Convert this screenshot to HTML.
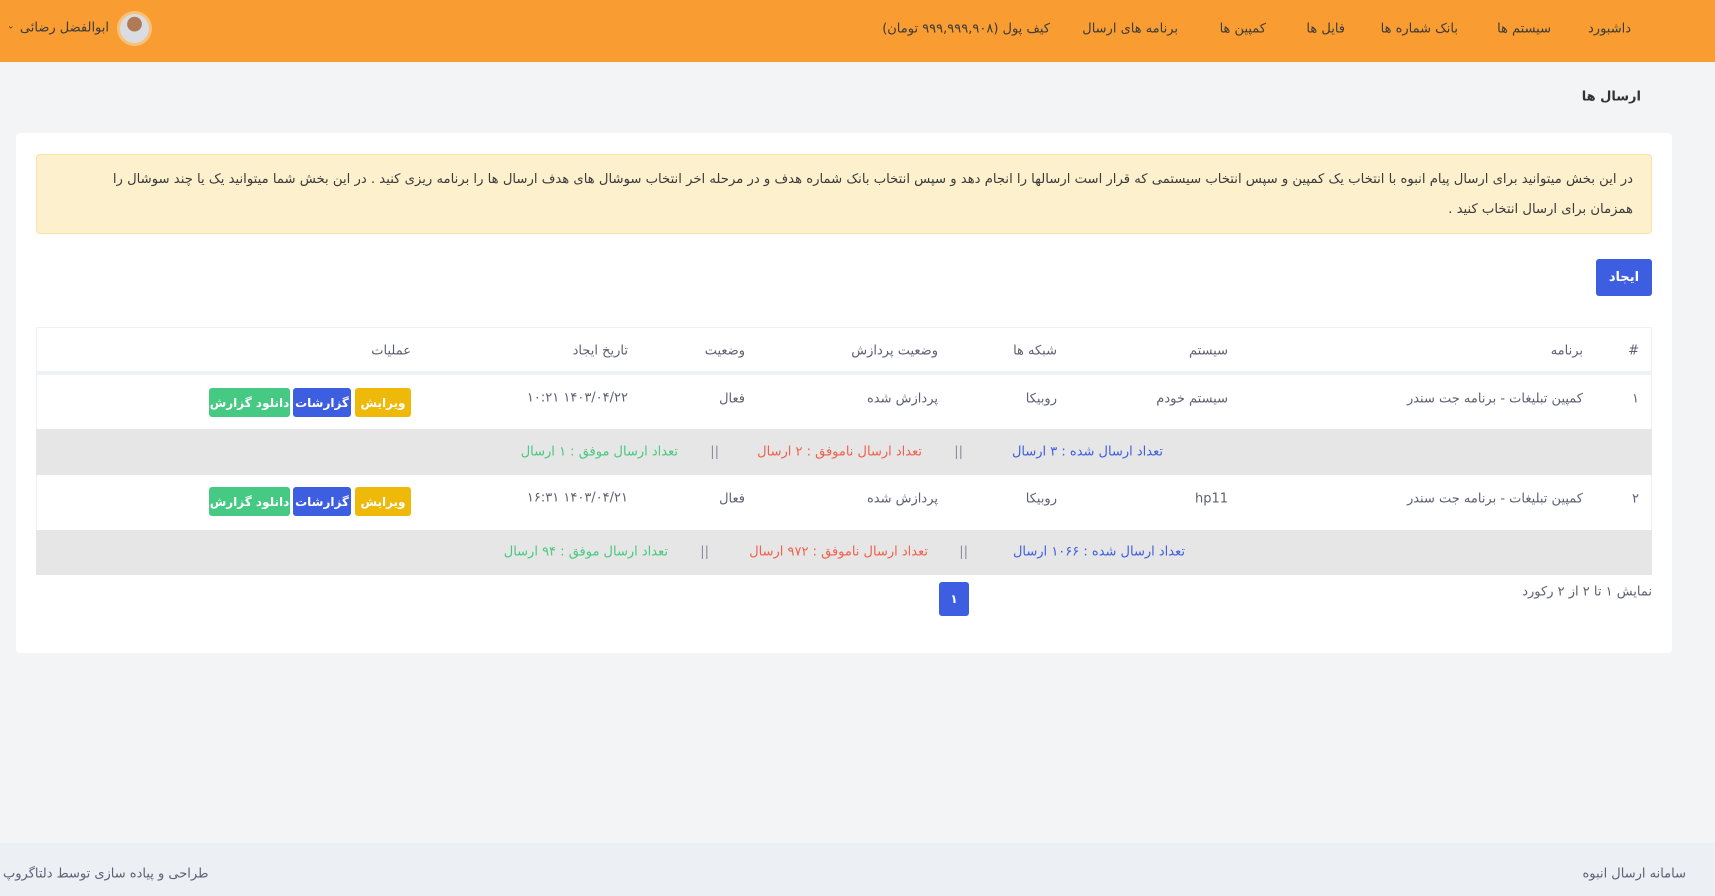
<!DOCTYPE html>
<html><head><meta charset="utf-8"><style>
*{margin:0;padding:0;box-sizing:border-box}
body{width:1715px;height:896px;background:#f3f4f6;font-family:"DejaVu Sans",sans-serif;font-size:13px;color:#5f5f73;position:relative;overflow:hidden}
.r{position:absolute;direction:rtl;white-space:nowrap;transform:translateY(-50%);line-height:1}
.hdr{position:absolute;left:0;top:0;width:1715px;height:62px;background:#f99d32}
.hdr .r{color:#3a3a3a;font-size:13px}
.card{position:absolute;left:16px;top:133px;width:1656px;height:520px;background:#fff;border-radius:4px}
.alert{position:absolute;left:36px;top:154px;width:1616px;height:80px;background:#fdf0cc;border:1px solid #f8e3a8;border-radius:4px;direction:rtl;padding:10px 18px 0 10px;line-height:30px;color:#3a3a3a;font-size:13.2px;text-align:right;white-space:nowrap;overflow:hidden}
.btn{position:absolute;color:#fff;font-size:12px;font-weight:bold;border-radius:3px;display:flex;align-items:center;justify-content:center;direction:rtl}
.line{position:absolute;left:36px;width:1616px}
</style></head><body>
<div class="hdr">
<div class="r" style="right:84px;top:29px">داشبورد</div>
<div class="r" style="right:164px;top:29px">سیستم ها</div>
<div class="r" style="right:257px;top:29px">بانک شماره ها</div>
<div class="r" style="right:370px;top:29px">فایل ها</div>
<div class="r" style="right:449px;top:29px">کمپین ها</div>
<div class="r" style="right:537px;top:29px">برنامه های ارسال</div>
<div class="r" style="right:665px;top:29px">کیف پول (۹۹۹,۹۹۹,۹۰۸ تومان)</div>
<div style="position:absolute;left:117px;top:11px;width:35px;height:35px;border-radius:50%;background:#f6c27a;padding:3px"><div style="width:29px;height:29px;border-radius:50%;background:radial-gradient(circle at 50% 35%,#b07a55 0 30%,#d9dde3 32% 100%)"></div></div>
<div class="r" style="right:1606px;top:28px">ابوالفضل رضائی</div>
<div class="r" style="left:7px;top:27px;font-size:9px">⌄</div>
</div>
<div class="r" style="right:74px;top:97px;font-weight:bold;color:#333;font-size:13px">ارسال ها</div>
<div class="card"></div>
<div class="alert">در این بخش میتوانید برای ارسال پیام انبوه با انتخاب یک کمپین و سپس انتخاب سیستمی که قرار است ارسالها را انجام دهد و سپس انتخاب بانک شماره هدف و در مرحله اخر انتخاب سوشال های هدف ارسال ها را برنامه ریزی کنید . در این بخش شما میتوانید یک یا چند سوشال را<br>همزمان برای ارسال انتخاب کنید .</div>
<div class="btn" style="left:1596px;top:259px;width:56px;height:37px;background:#3d5ee1;font-size:13px">ایجاد</div>

<div class="line" style="top:327px;height:48px;border:1px solid #eef0f4;border-bottom:4px solid #eef1f6"></div>
<div class="line" style="top:375px;height:155px;border-left:1px solid #eef0f4;border-right:1px solid #eef0f4"></div>
<div class="line" style="top:429px;height:46px;background:#e6e6e6"></div>
<div class="line" style="top:530px;height:45px;background:#e6e6e6"></div>

<div class="r" style="right:76px;top:351px">#</div>
<div class="r" style="right:132px;top:351px">برنامه</div>
<div class="r" style="right:487px;top:351px">سیستم</div>
<div class="r" style="right:658px;top:351px">شبکه ها</div>
<div class="r" style="right:777px;top:351px">وضعیت پردازش</div>
<div class="r" style="right:970px;top:351px">وضعیت</div>
<div class="r" style="right:1087px;top:351px">تاریخ ایجاد</div>
<div class="r" style="right:1304px;top:351px">عملیات</div>

<div class="r" style="right:76px;top:399px">۱</div>
<div class="r" style="right:132px;top:399px">کمپین تبلیغات - برنامه جت سندر</div>
<div class="r" style="right:487px;top:399px">سیستم خودم</div>
<div class="r" style="right:658px;top:399px">روبیکا</div>
<div class="r" style="right:777px;top:399px">پردازش شده</div>
<div class="r" style="right:970px;top:399px">فعال</div>
<div class="r" style="right:1087px;top:398px">۱۴۰۳/۰۴/۲۲ ۱۰:۲۱</div>
<div class="btn" style="left:355px;top:388px;width:56px;height:29px;background:#efb90a">ویرایش</div>
<div class="btn" style="left:293px;top:388px;width:58px;height:29px;background:#3d5ee1">گزارشات</div>
<div class="btn" style="left:209px;top:388px;width:81px;height:29px;background:#45c983">دانلود گزارش</div>

<div class="r" style="right:552px;top:452px;color:#3d5ee1">تعداد ارسال شده : ۳ ارسال</div>
<div class="r" style="right:752px;top:452px;color:#8a8aa0">||</div>
<div class="r" style="right:793px;top:452px;color:#f0604d">تعداد ارسال ناموفق : ۲ ارسال</div>
<div class="r" style="right:996px;top:452px;color:#8a8aa0">||</div>
<div class="r" style="right:1037px;top:452px;color:#47c97f">تعداد ارسال موفق : ۱ ارسال</div>

<div class="r" style="right:76px;top:499px">۲</div>
<div class="r" style="right:132px;top:499px">کمپین تبلیغات - برنامه جت سندر</div>
<div class="r" style="right:487px;top:499px">hp11</div>
<div class="r" style="right:658px;top:499px">روبیکا</div>
<div class="r" style="right:777px;top:499px">پردازش شده</div>
<div class="r" style="right:970px;top:499px">فعال</div>
<div class="r" style="right:1087px;top:498px">۱۴۰۳/۰۴/۲۱ ۱۶:۳۱</div>
<div class="btn" style="left:355px;top:487px;width:56px;height:29px;background:#efb90a">ویرایش</div>
<div class="btn" style="left:293px;top:487px;width:58px;height:29px;background:#3d5ee1">گزارشات</div>
<div class="btn" style="left:209px;top:487px;width:81px;height:29px;background:#45c983">دانلود گزارش</div>

<div class="r" style="right:530px;top:552px;color:#3d5ee1">تعداد ارسال شده : ۱۰۶۶ ارسال</div>
<div class="r" style="right:747px;top:552px;color:#8a8aa0">||</div>
<div class="r" style="right:787px;top:552px;color:#f0604d">تعداد ارسال ناموفق : ۹۷۲ ارسال</div>
<div class="r" style="right:1006px;top:552px;color:#8a8aa0">||</div>
<div class="r" style="right:1047px;top:552px;color:#47c97f">تعداد ارسال موفق : ۹۴ ارسال</div>

<div class="r" style="right:63px;top:592px">نمایش ۱ تا ۲ از ۲ رکورد</div>
<div class="btn" style="left:939px;top:582px;width:30px;height:34px;background:#3d5ee1">۱</div>

<div style="position:absolute;left:0;top:843px;width:1715px;height:53px;background:#eceff4"></div>
<div class="r" style="right:29px;top:874px">سامانه ارسال انبوه</div>
<div class="r" style="left:3px;top:874px">طراحی و پیاده سازی توسط دلتاگروپ</div>
</body></html>
